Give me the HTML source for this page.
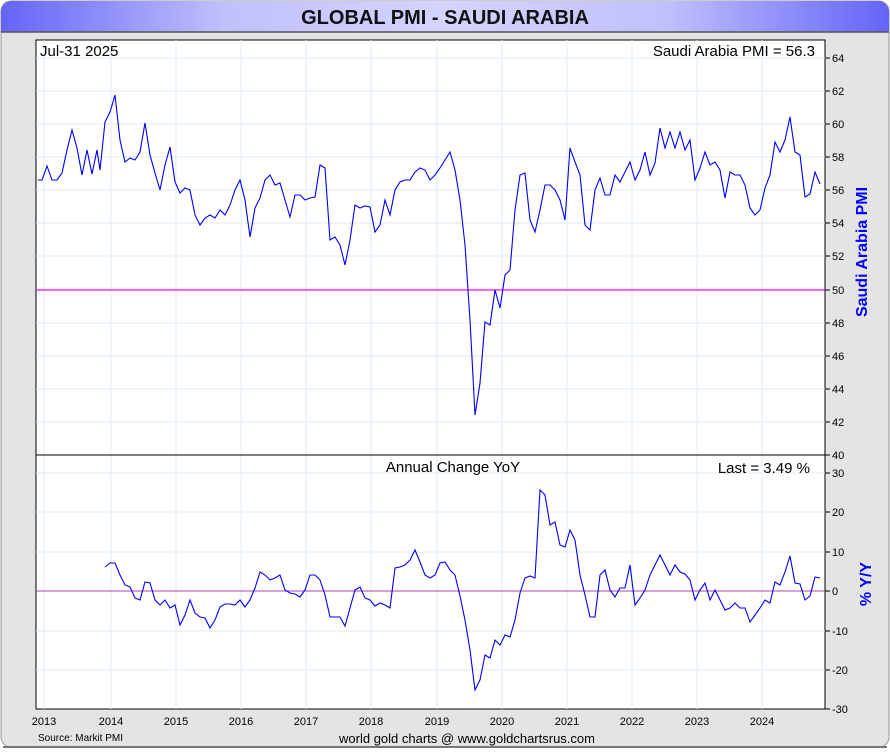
<!DOCTYPE html>
<html><head><meta charset="utf-8"><style>
body{margin:0;background:#fff;}
svg text{font-family:"Liberation Sans",sans-serif;}
</style></head><body>
<svg width="890" height="750" viewBox="0 0 890 750" xmlns="http://www.w3.org/2000/svg">
<defs>
<linearGradient id="tg" x1="0" x2="1" y1="0" y2="0">
<stop offset="0" stop-color="#6464f8"/><stop offset="0.25" stop-color="#c0c0fc"/><stop offset="0.5" stop-color="#d4d4ff"/><stop offset="0.75" stop-color="#c0c0fc"/><stop offset="1" stop-color="#6464f8"/>
</linearGradient>
</defs>
<rect x="1" y="1" width="888" height="746" rx="10" fill="#e4e4e4" stroke="#999" stroke-width="1"/>
<path d="M1,12 a11,11 0 0 1 11,-11 h866 a11,11 0 0 1 11,11 v20 h-888z" fill="url(#tg)"/>
<line x1="1" y1="32" x2="889" y2="32" stroke="#555" stroke-width="1.5"/>
<line x1="3" y1="747" x2="887" y2="747" stroke="#777" stroke-width="2"/>
<text x="445" y="24" text-anchor="middle" font-size="20" font-weight="bold" fill="#111">GLOBAL PMI - SAUDI ARABIA</text>
<rect x="36" y="40" width="789" height="669" fill="#fff" stroke="#000" stroke-width="1"/>
<g stroke="#dcecf8" stroke-width="1">
<line x1="44" y1="40" x2="44" y2="709"/><line x1="111" y1="40" x2="111" y2="709"/><line x1="176" y1="40" x2="176" y2="709"/><line x1="241" y1="40" x2="241" y2="709"/><line x1="306" y1="40" x2="306" y2="709"/><line x1="371" y1="40" x2="371" y2="709"/><line x1="437" y1="40" x2="437" y2="709"/><line x1="502" y1="40" x2="502" y2="709"/><line x1="567" y1="40" x2="567" y2="709"/><line x1="632" y1="40" x2="632" y2="709"/><line x1="697" y1="40" x2="697" y2="709"/><line x1="762" y1="40" x2="762" y2="709"/>
<line x1="36" y1="58" x2="825" y2="58"/><line x1="36" y1="91" x2="825" y2="91"/><line x1="36" y1="124" x2="825" y2="124"/><line x1="36" y1="157" x2="825" y2="157"/><line x1="36" y1="190" x2="825" y2="190"/><line x1="36" y1="223" x2="825" y2="223"/><line x1="36" y1="256" x2="825" y2="256"/><line x1="36" y1="323" x2="825" y2="323"/><line x1="36" y1="356" x2="825" y2="356"/><line x1="36" y1="389" x2="825" y2="389"/><line x1="36" y1="422" x2="825" y2="422"/>
<line x1="36" y1="473" x2="825" y2="473"/><line x1="36" y1="512" x2="825" y2="512"/><line x1="36" y1="552" x2="825" y2="552"/><line x1="36" y1="631" x2="825" y2="631"/><line x1="36" y1="670" x2="825" y2="670"/>
</g>
<line x1="36" y1="455" x2="825" y2="455" stroke="#000"/>
<line x1="36" y1="290" x2="825" y2="290" stroke="#f0f" stroke-width="1.2"/>
<line x1="36" y1="591" x2="825" y2="591" stroke="#b040b0" stroke-width="1"/>
<polyline fill="none" stroke="#00f" stroke-width="1.1" points="38,180 42,180 47,166 52,180 57,180 62,173 67,150 72,130 77,148 82,175 87,150 92,174 97,150 100,170 105,122 110,112 115,95 120,140 125,162 130,158 135,160 140,152 145,123 150,155 155,173 160,190 165,165 170,147 175,182 180,193 185,188 190,190 195,215 200,225 205,218 210,215 215,218 220,210 225,215 230,205 235,190 240,180 245,200 250,237 255,208 260,198 265,180 270,175 275,185 280,183 285,200 290,217 295,195 300,195 305,200 310,198 315,197 320,165 325,168 330,240 335,237 340,245 345,265 350,240 355,205 360,208 365,206 370,207 375,232 380,225 385,200 390,215 395,190 400,182 405,180 410,180 415,172 420,168 425,170 430,180 435,175 440,168 445,160 450,152 455,170 460,200 465,245 470,320 475,415 480,383 485,322 490,325 495,290 500,308 505,275 510,270 515,210 520,175 525,173 530,220 535,232 540,210 545,185 550,185 555,190 560,200 565,220 570,148 575,162 580,175 585,225 590,230 595,190 600,178 605,195 610,195 615,175 620,182 625,172 630,162 635,180 640,170 645,152 650,175 655,163 660,128 665,148 670,132 675,148 680,132 685,150 690,140 695,180 700,168 705,152 710,165 715,162 720,170 725,198 730,172 735,175 740,175 745,185 750,208 755,215 760,210 765,188 770,175 775,142 780,152 785,140 790,117 795,152 800,155 805,197 810,194 815,172 820,184"/>
<polyline fill="none" stroke="#00f" stroke-width="1.1" points="105,567 110,563 115,563 120,575 125,585 130,587 135,598 140,600 145,582 150,583 155,600 160,605 165,600 170,608 175,605 180,625 185,615 190,600 195,613 200,617 205,618 210,628 215,620 220,607 225,604 230,604 235,605 240,600 245,607 250,600 255,588 260,572 265,575 270,580 275,578 280,575 285,590 290,593 295,594 300,597 305,590 310,575 315,575 320,580 325,595 330,617 335,617 340,617 345,626 350,608 355,590 360,587 365,598 370,600 375,606 380,603 385,605 390,608 395,568 400,567 405,565 410,560 415,550 420,562 425,575 430,578 435,575 440,563 445,562 450,570 455,575 460,596 465,620 470,650 475,690 480,680 485,655 490,658 495,640 500,645 505,635 510,637 515,620 520,593 525,578 530,576 535,578 540,490 545,495 550,525 555,522 560,545 565,547 570,530 575,540 580,575 585,595 590,617 595,617 600,575 605,570 610,590 615,597 620,588 625,588 630,565 635,605 640,598 645,590 650,575 655,565 660,555 665,565 670,575 675,565 680,572 685,574 690,580 695,600 700,590 705,583 710,600 715,590 720,600 725,610 730,608 735,603 740,608 745,608 750,622 755,615 760,608 765,600 770,603 775,582 780,585 785,572 790,556 795,583 800,584 805,600 810,596 815,577 820,578"/>
<g font-size="15" fill="#000">
<text x="40" y="56">Jul-31  2025</text>
<text x="815" y="56" text-anchor="end">Saudi Arabia PMI = 56.3</text>
<text x="453" y="472" text-anchor="middle">Annual Change YoY</text>
<text x="810" y="473" text-anchor="end">Last = 3.49 %</text>
</g>
<g font-size="11" fill="#000">
<g stroke="#000"><line x1="825" y1="58" x2="830" y2="58"/><line x1="825" y1="91" x2="830" y2="91"/><line x1="825" y1="124" x2="830" y2="124"/><line x1="825" y1="157" x2="830" y2="157"/><line x1="825" y1="190" x2="830" y2="190"/><line x1="825" y1="223" x2="830" y2="223"/><line x1="825" y1="256" x2="830" y2="256"/><line x1="825" y1="290" x2="830" y2="290"/><line x1="825" y1="323" x2="830" y2="323"/><line x1="825" y1="356" x2="830" y2="356"/><line x1="825" y1="389" x2="830" y2="389"/><line x1="825" y1="422" x2="830" y2="422"/><line x1="825" y1="455" x2="830" y2="455"/><line x1="825" y1="473" x2="830" y2="473"/><line x1="825" y1="512" x2="830" y2="512"/><line x1="825" y1="552" x2="830" y2="552"/><line x1="825" y1="591" x2="830" y2="591"/><line x1="825" y1="631" x2="830" y2="631"/><line x1="825" y1="670" x2="830" y2="670"/><line x1="825" y1="709" x2="830" y2="709"/></g>
<text x="832" y="62">64</text><text x="832" y="95">62</text><text x="832" y="128">60</text><text x="832" y="161">58</text><text x="832" y="194">56</text><text x="832" y="227">54</text><text x="832" y="260">52</text><text x="832" y="294">50</text><text x="832" y="327">48</text><text x="832" y="360">46</text><text x="832" y="393">44</text><text x="832" y="426">42</text><text x="832" y="459">40</text>
<text x="832" y="477">30</text><text x="832" y="516">20</text><text x="832" y="556">10</text><text x="832" y="595">0</text><text x="832" y="635">-10</text><text x="832" y="674">-20</text><text x="832" y="713">-30</text>
<g text-anchor="middle"><text x="44" y="725">2013</text><text x="111" y="725">2014</text><text x="176" y="725">2015</text><text x="241" y="725">2016</text><text x="306" y="725">2017</text><text x="371" y="725">2018</text><text x="437" y="725">2019</text><text x="502" y="725">2020</text><text x="567" y="725">2021</text><text x="632" y="725">2022</text><text x="697" y="725">2023</text><text x="762" y="725">2024</text></g>
</g>
<text x="38" y="741" font-size="10" fill="#000">Source: Markit PMI</text>
<text x="467" y="743" font-size="13" text-anchor="middle" fill="#000">world gold charts @ www.goldchartsrus.com</text>
<text transform="translate(867,252) rotate(-90)" font-size="16" font-weight="bold" fill="#00f" text-anchor="middle">Saudi Arabia PMI</text>
<text transform="translate(871,584) rotate(-90)" font-size="16" font-weight="bold" fill="#00f" text-anchor="middle">% Y/Y</text>
</svg>
</body></html>
